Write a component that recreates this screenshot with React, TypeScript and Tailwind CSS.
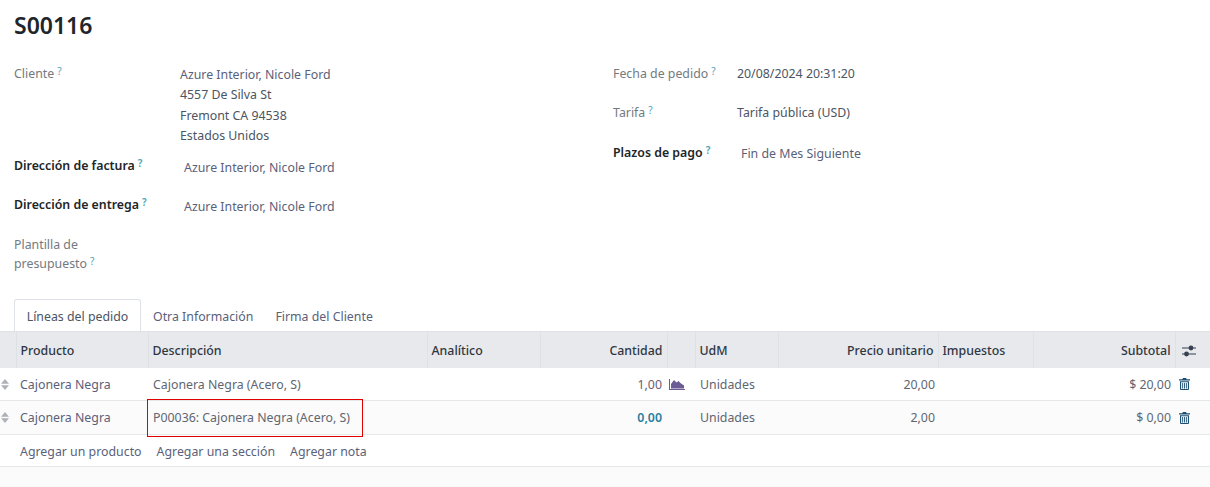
const labelMuted = "text-[#747a80]";
const Q = () => <sup className="ml-[3px] text-[10px] leading-none text-[#4fa3b8] relative top-[-3px]">?</sup>;

function Sort() {
  return (
    <svg width="8" height="11" viewBox="0 0 8 11" className="fill-[#adb2b8]">
      <path d="M4 0 8 4.7H0Z" />
      <path d="M4 11 0 6.3H8Z" />
    </svg>
  );
}

function Trash() {
  return (
    <svg width="11" height="12" viewBox="0 0 11 12" className="fill-[#1d4f72]">
      <path d="M4 0h3l.7 1.3H11v1.2H0V1.3h3.3Z" />
      <path fillRule="evenodd" d="M1 3.2h9V11a1 1 0 0 1-1 1H2a1 1 0 0 1-1-1Zm1.1 1V11h6.8V4.2Z" />
      <path d="M3.2 5h.9v5.4h-.9ZM5.05 5h.9v5.4h-.9ZM6.9 5h.9v5.4h-.9Z" />
    </svg>
  );
}

function AreaChart() {
  return (
    <svg width="16" height="11" viewBox="0 0 16 11" className="fill-[#6b5b95]">
      <path d="M0 0h1v10h15v1H0Z" />
      <path d="M2 9.5V5l3-4 2.5 2.5L9.5 2 12 4.5l3 2v3Z" />
    </svg>
  );
}

function Sliders() {
  return (
    <svg width="14" height="12" viewBox="0 0 14 12" className="fill-[#374151]">
      <path d="M0 2.5h14v1H0ZM0 8.5h14v1H0Z" />
      <circle cx="9" cy="3" r="2.4" />
      <circle cx="4.5" cy="9" r="2.4" />
    </svg>
  );
}

function Field({ label, strong, children, w, className = "" }: { label: React.ReactNode; strong?: boolean; children?: React.ReactNode; w: string; className?: string }) {
  return (
    <div className={`flex ${className}`}>
      <div className={`${w} shrink-0 leading-[20px] ${strong ? "font-semibold text-[#212529]" : labelMuted}`}>{label}</div>
      <div className="leading-[20.4px] text-[#4b5563]">{children}</div>
    </div>
  );
}

const cols = [16, 132, 279, 113, 127, 28, 83, 160, 95, 142, 35];
const heads: [string, string][] = [
  ["", ""],
  ["Producto", "left"],
  ["Descripción", "left"],
  ["Analítico", "left"],
  ["Cantidad", "right"],
  ["", ""],
  ["UdM", "left"],
  ["Precio unitario", "right"],
  ["Impuestos", "left"],
  ["Subtotal", "right"],
  ["", ""],
];

function Row({ bg, qty, qtyCls, price, sub, chart, desc, boxed, pad }: { bg: string; qty: string; qtyCls: string; price: string; sub: string; chart?: boolean; desc: string; boxed?: boolean; pad?: string }) {
  return (
    <tr className={`${bg} border-b border-[#e5e7e9] text-[#5f6672]`}>
      <td className="p-0"><div className="flex pl-[1px]"><Sort /></div></td>
      <td className={`pl-[4px] text-[#5b5f7a] ${pad}`}>Cajonera Negra</td>
      <td className={`pl-[5px] ${pad} ${boxed ? "relative" : ""}`}>
        {boxed && <div className="absolute left-[-1px] top-[-2px] h-[38px] w-[216px] border border-[#e00000]" />}
        {desc}
      </td>
      <td />
      <td className={`pr-[5px] text-right ${pad} ${qtyCls}`}>{qty}</td>
      <td className="pl-[2px] pt-[1px]">{chart && <div className="flex"><AreaChart /></div>}</td>
      <td className={`pl-[5px] ${pad}`}>Unidades</td>
      <td className={`pr-[3px] text-right ${pad}`}>{price}</td>
      <td />
      <td className={`pr-[4px] text-right ${pad}`}>{sub}</td>
      <td className="pl-[4px]"><Trash /></td>
    </tr>
  );
}

export default function App() {
  return (
    <div className="h-[487px] w-[1210px] overflow-hidden bg-white text-[12.35px] font-['Noto_Sans',sans-serif]">
      <div className="px-[14px] pt-[7px]">
        <h1 className="text-[23px] font-semibold leading-[36px] text-[#212529]">S00116</h1>
        <div className="mt-[21px] flex">
          <div className="w-[599px]">
            <Field w="w-[166px]" label={<>Cliente<Q /></>}>
              <div className="pt-[1px] text-[#5b5f7a]">Azure Interior, Nicole Ford</div>
              <div>4557 De Silva St</div>
              <div>Fremont CA 94538</div>
              <div>Estados Unidos</div>
            </Field>
            <Field w="w-[170px]" strong className="mt-[9px]" label={<>Dirección de factura<Q /></>}>
              <div className="pt-[2px] text-[#5b5f7a]">Azure Interior, Nicole Ford</div>
            </Field>
            <Field w="w-[170px]" strong className="mt-[17px]" label={<>Dirección de entrega<Q /></>}>
              <div className="pt-[2px] text-[#5b5f7a]">Azure Interior, Nicole Ford</div>
            </Field>
            <div className={`mt-[18px] leading-[19px] ${labelMuted}`}>Plantilla de<br />presupuesto<Q /></div>
          </div>
          <div>
            <Field w="w-[124px]" label={<>Fecha de pedido<Q /></>}>20/08/2024 20:31:20</Field>
            <Field w="w-[124px]" className="mt-[19px]" label={<>Tarifa<Q /></>}>Tarifa pública (USD)</Field>
            <Field w="w-[128px]" strong className="mt-[19px]" label={<>Plazos de pago<Q /></>}>
              <div className="pt-[1px] text-[#5b5f7a]">Fin de Mes Siguiente</div>
            </Field>
          </div>
        </div>
        <div className="mt-[26px] flex h-[32px] text-[#5b5f7a]">
          <div className="relative z-10 flex h-[32px] w-[127px] items-center justify-center rounded-t-[3px] border border-b-0 border-[#dee2e6] bg-white pt-[2px] text-[#4b5563]">Líneas del pedido</div>
          <div className="flex items-center pl-[12px] pt-[4px]">Otra Información</div>
          <div className="flex items-center pl-[22px] pt-[4px]">Firma del Cliente</div>
        </div>
      </div>
      <div className="h-[161px] bg-[#fbfbfb]">
        <table className="w-[1210px] table-fixed border-collapse">
          <colgroup>
            {cols.map((w, i) => <col key={i} style={{ width: w }} />)}
          </colgroup>
          <thead>
            <tr className="h-[36px] border-t border-[#dee2e6] bg-[#e7e9ed]">
              {heads.map(([t, a], i) => (
                <th key={i} className={`border-r border-[#dee2e6] pt-[2px] font-medium text-[#2f3742] last:border-r-0 ${a === "right" ? "pr-[4px] text-right" : "pl-[4px] text-left"}`}>
                  {i === 10 ? <div className="flex pl-[2px]"><Sliders /></div> : t}
                </th>
              ))}
            </tr>
          </thead>
          <tbody>
            <Row bg="bg-white h-[33px]" pad="pt-[2px]" qty="1,00" qtyCls="text-[#6d5a75]" price="20,00" sub="$ 20,00" chart desc="Cajonera Negra (Acero, S)" />
            <Row bg="bg-[#fbfbfb] h-[34px]" qty="0,00" qtyCls="font-semibold text-[#2b7f9e]" price="2,00" sub="$ 0,00" desc="P00036: Cajonera Negra (Acero, S)" boxed />
            <tr className="h-[32px] border-b border-[#e5e7e9] bg-white text-[#5b5f7a]">
              <td colSpan={11} className="pl-[20px] pt-[2px]">
                <span>Agregar un producto</span>
                <span className="ml-[15px]">Agregar una sección</span>
                <span className="ml-[15px]">Agregar nota</span>
              </td>
            </tr>
          </tbody>
        </table>
      </div>
    </div>
  );
}
